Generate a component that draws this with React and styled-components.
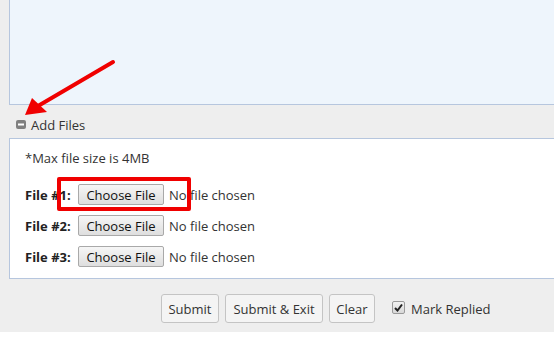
import React from "react";
import styled, { createGlobalStyle } from "styled-components";

const Global = createGlobalStyle`
  html, body { margin: 0; padding: 0; background: #ffffff; }
  body { font-family: "Open Sans", "Liberation Sans", sans-serif; font-size: 13px; color: #333; }
`;

const Page = styled.div`
  position: relative;
  width: 554px;
  height: 337px;
  overflow: hidden;
`;

const Shell = styled.div`
  background: #eeeeee;
  height: 332px;
  padding-left: 9px;
  box-sizing: border-box;
  display: flex;
  flex-direction: column;
`;

const Editor = styled.div`
  height: 104px;
  flex-shrink: 0;
  background: #eef5fc;
  border-left: 1px solid #b6c6de;
  border-bottom: 1px solid #b6c6de;
  margin-right: -10px;
`;

const SectionHeader = styled.div`
  height: 33px;
  flex-shrink: 0;
  display: flex;
  align-items: center;
  gap: 5px;
  padding: 6px 0 0 7px;
  box-sizing: border-box;
  color: #333;
  font-size: 13px;
`;

const Panel = styled.div`
  background: #ffffff;
  border: 1px solid #b6c6de;
  border-right: none;
  height: 141px;
  flex-shrink: 0;
  margin-right: -10px;
  padding: 8px 0 0 15px;
  box-sizing: border-box;
  display: flex;
  flex-direction: column;
`;

const Note = styled.div`
  height: 22px;
  line-height: 22px;
  margin-bottom: 15px;
`;

const FileRow = styled.div`
  display: flex;
  align-items: center;
  height: 21px;
  margin-bottom: 10px;
`;

const FileLabel = styled.span`
  font-weight: bold;
  width: 53px;
  color: #222;
`;

const ChooseButton = styled.span`
  display: inline-flex;
  align-items: center;
  justify-content: center;
  box-sizing: border-box;
  width: 86px;
  height: 21px;
  border: 1px solid #a9a9a9;
  border-radius: 2px;
  background: linear-gradient(#f6f6f6, #dedede);
  color: #111;
  font-size: 13px;
`;

const NoFile = styled.span`
  margin-left: 5px;
  color: #333;
`;

const Footer = styled.div`
  display: flex;
  align-items: center;
  padding: 15px 0 0 152px;
  gap: 6px;
`;

const Btn = styled.button`
  font-family: "Open Sans", "Liberation Sans", sans-serif;
  font-size: 13px;
  color: #333;
  height: 29px;
  padding: 0 4px;
  box-sizing: border-box;
  border: 1px solid #c4c4c4;
  border-radius: 3px;
  background: #f4f4f4;
  width: ${(p) => p.$w}px;
`;

const CheckWrap = styled.label`
  display: flex;
  align-items: center;
  gap: 6px;
  margin-left: 11px;
  color: #333;
`;

const Box = styled.span`
  width: 11px;
  height: 11px;
  border: 1px solid #9a9a9a;
  border-radius: 2px;
  background: linear-gradient(#f2f2f2, #d8d8d8);
  display: flex;
  align-items: center;
  justify-content: center;
  margin-top: -3px;
`;

const RedBox = styled.div`
  position: absolute;
  left: 57px;
  top: 177px;
  width: 134px;
  height: 34px;
  box-sizing: border-box;
  border: 4px solid #f00000;
  border-radius: 2px;
`;

const ArrowSvg = styled.svg`
  position: absolute;
  left: 0;
  top: 0;
  pointer-events: none;
`;

function MinusIcon() {
  return (
    <svg width="10" height="9" viewBox="0 0 10 9">
      <rect x="0" y="0" width="10" height="9" rx="2" fill="#808080" />
      <rect x="2" y="3.5" width="6" height="2" fill="#ffffff" />
    </svg>
  );
}

function Check() {
  return (
    <svg width="9" height="9" viewBox="0 0 9 9">
      <path d="M1 5 L3.5 7.5 L8 1.5" stroke="#222" strokeWidth="2" fill="none" />
    </svg>
  );
}

export default function App() {
  return (
    <Page>
      <Global />
      <Shell>
        <Editor />
        <SectionHeader>
          <MinusIcon />
          <span>Add Files</span>
        </SectionHeader>
        <Panel>
          <Note>*Max file size is 4MB</Note>
          {[1, 2, 3].map((n) => (
            <FileRow key={n}>
              <FileLabel>File #{n}:</FileLabel>
              <ChooseButton>Choose File</ChooseButton>
              <NoFile>No file chosen</NoFile>
            </FileRow>
          ))}
        </Panel>
        <Footer>
          <Btn $w={58}>Submit</Btn>
          <Btn $w={98}>Submit &amp; Exit</Btn>
          <Btn $w={46}>Clear</Btn>
          <CheckWrap>
            <Box>
              <Check />
            </Box>
            <span>Mark Replied</span>
          </CheckWrap>
        </Footer>
      </Shell>
      <RedBox />
      <ArrowSvg width="554" height="337">
        <line x1="113" y1="62" x2="38" y2="106" stroke="#f00000" strokeWidth="4" strokeLinecap="round" />
        <polygon points="25,115 32,98 47,112" fill="#f00000" />
      </ArrowSvg>
    </Page>
  );
}
